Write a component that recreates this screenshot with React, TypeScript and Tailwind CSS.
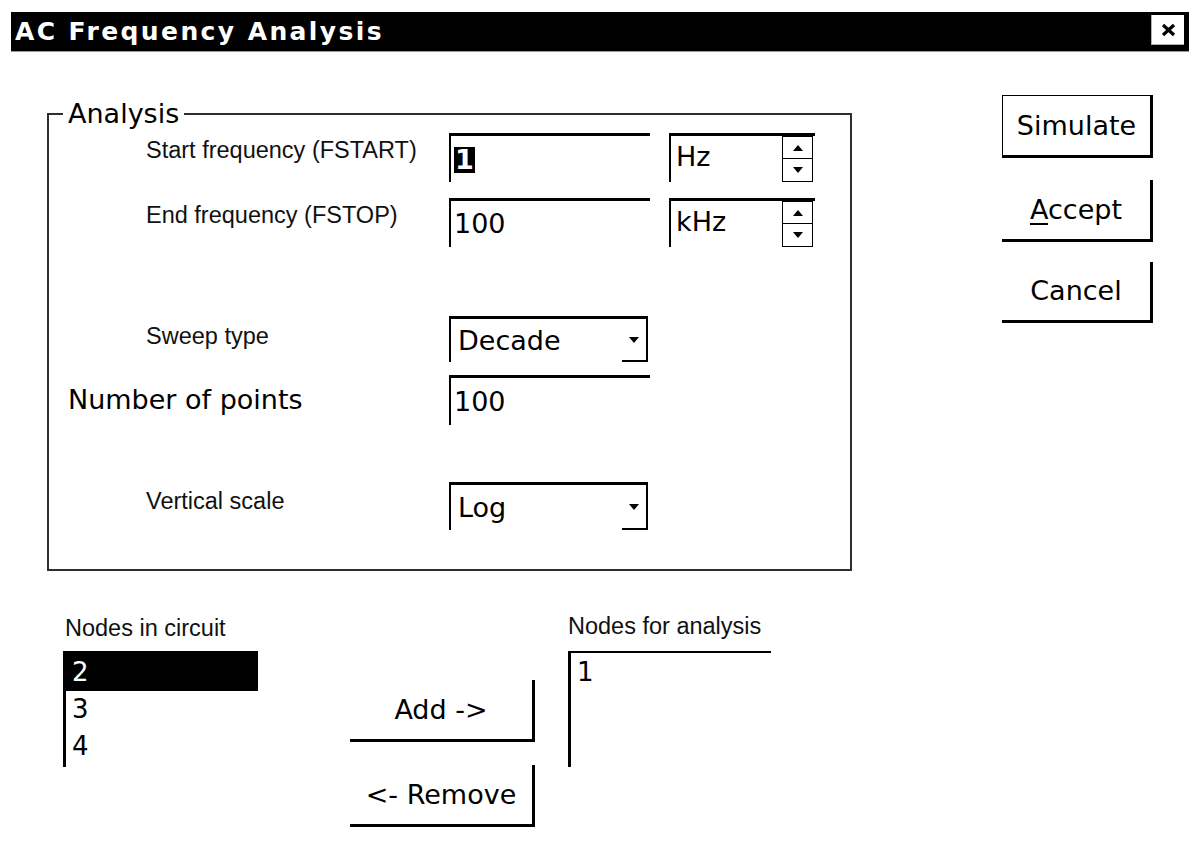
import React from "react";

const big = "font-['DejaVu_Sans',sans-serif] text-[27px] leading-[32px]";
const small = "font-['Liberation_Sans',Arial,sans-serif] text-[23.5px] leading-[27px] text-[#111]";

function Tri({ down }: { down?: boolean }) {
  return (
    <svg width="10" height="6" viewBox="0 0 10 6">
      <polygon points={down ? "0,0 10,0 5,6" : "0,6 10,6 5,0"} fill="black" />
    </svg>
  );
}

function TextField({ children, h = "h-[49px]" }: { children: React.ReactNode; h?: string }) {
  return (
    <div className={`w-[201px] ${h} border-t-[3px] border-l-2 border-black flex items-center pl-[3px] ${big}`}>
      {children}
    </div>
  );
}

function UnitSpinner({ unit }: { unit: string }) {
  return (
    <div className="ml-[19px] w-[146px] h-[49px] border-t-[3px] border-l-2 border-black flex">
      <div className={`flex-1 pl-[5px] pt-[5px] ${big}`}>{unit}</div>
      <div className="w-[31px] mr-[2px] flex flex-col">
        <div className="h-[23px] border border-black flex items-center justify-center">
          <Tri />
        </div>
        <div className="h-[23px] border border-t-0 border-black flex items-center justify-center">
          <Tri down />
        </div>
      </div>
    </div>
  );
}

function Dropdown({ value, h }: { value: string; h: string }) {
  return (
    <div className={`w-[199px] ${h} border-t-[3px] border-l-2 border-black flex`}>
      <div className={`flex-1 pl-[7px] flex items-center ${big}`}>{value}</div>
      <div className="w-[26px] border-r-2 border-b-2 border-black flex items-center justify-center">
        <Tri down />
      </div>
    </div>
  );
}

function ShadowButton({ children, className = "" }: { children: React.ReactNode; className?: string }) {
  return (
    <div className={`border-r-[3px] border-b-[3px] border-black flex items-center justify-center ${big} ${className}`}>
      {children}
    </div>
  );
}

export default function App() {
  return (
    <div className="w-[1189px] h-[863px] bg-white text-black overflow-hidden">
      {/* Title bar */}
      <div className="mt-[12px] ml-[11px] h-[40px] bg-black border-b border-[#9a9a9a] flex items-start justify-between">
        <div className="pl-[4px] font-['DejaVu_Sans',sans-serif] font-bold text-[25px] leading-[40px] tracking-[2.4px] text-white">
          AC Frequency Analysis
        </div>
        <div className="mt-[3px] mr-[5px] w-[33px] h-[30px] bg-white border-l border-b border-[#b0b0b0] flex items-center justify-center">
          <svg width="15" height="14" viewBox="0 0 15 14">
            <path d="M2 2 L13 12 M13 2 L2 12" stroke="black" strokeWidth="3.2" />
          </svg>
        </div>
      </div>

      <div className="flex items-start">
        {/* Left column */}
        <div className="ml-[47px] mt-[61px] w-[805px]">
          <div className="h-[458px] border-2 border-[#2e2e2e]">
            <div className={`-mt-[17px] ml-[14px] w-fit bg-white px-[5px] ${big}`}>Analysis</div>

            <div className="mt-[3px] flex">
              <div className={`w-[400px] pl-[97px] pt-[4px] ${small}`}>Start frequency (FSTART)</div>
              <div className={`w-[201px] h-[49px] border-t-[3px] border-l-2 border-black pl-[3px] pt-[11px] ${big}`}>
                <span className="block w-fit bg-black text-white font-bold px-[1px] leading-[26px]">1</span>
              </div>
              <UnitSpinner unit="Hz" />
            </div>

            <div className="mt-[16px] flex">
              <div className={`w-[400px] pl-[97px] pt-[4px] ${small}`}>End frequency (FSTOP)</div>
              <TextField>100</TextField>
              <UnitSpinner unit="kHz" />
            </div>

            <div className="mt-[69px] flex">
              <div className={`w-[400px] pl-[97px] pt-[7px] ${small}`}>Sweep type</div>
              <Dropdown value="Decade" h="h-[46px]" />
            </div>

            <div className="mt-[13px] flex">
              <div className={`w-[400px] pl-[19px] pt-[9px] ${big}`}>Number of points</div>
              <TextField h="h-[50px]">100</TextField>
            </div>

            <div className="mt-[57px] flex">
              <div className={`w-[400px] pl-[97px] pt-[6px] ${small}`}>Vertical scale</div>
              <Dropdown value="Log" h="h-[48px]" />
            </div>
          </div>

          {/* Node lists */}
          <div className="mt-[42px] flex items-start">
            <div className="ml-[16px] w-[195px]">
              <div className={`pl-[2px] pt-[2px] ${small}`}>Nodes in circuit</div>
              <div className="mt-[9px] h-[116px] border-t-2 border-l-[3px] border-black font-['DejaVu_Sans',sans-serif] text-[26px]">
                <div className="h-[38px] bg-black text-white pl-[6px] flex items-center">2</div>
                <div className="h-[37px] pl-[6px] flex items-center">3</div>
                <div className="h-[37px] pl-[6px] flex items-center">4</div>
              </div>
            </div>

            <div className="ml-[92px] mt-[67px] w-[185px]">
              <ShadowButton className="h-[62px]">Add -&gt;</ShadowButton>
              <ShadowButton className="mt-[23px] h-[62px]">&lt;- Remove</ShadowButton>
            </div>

            <div className="ml-[33px] w-[203px]">
              <div className={small}>Nodes for analysis</div>
              <div className="mt-[11px] h-[116px] border-t-2 border-l-[3px] border-black font-['DejaVu_Sans',sans-serif] text-[26px]">
                <div className="h-[38px] pl-[6px] flex items-center">1</div>
              </div>
            </div>
          </div>
        </div>

        {/* Right column: action buttons */}
        <div className="ml-[150px] mt-[43px] w-[151px] flex flex-col">
          <div className={`h-[63px] border border-black border-r-[3px] border-b-[3px] flex items-center justify-center ${big}`}>
            Simulate
          </div>
          <ShadowButton className="mt-[22px] h-[62px]">
            <span>
              <span className="underline decoration-2 underline-offset-[4px]">A</span>ccept
            </span>
          </ShadowButton>
          <ShadowButton className="mt-[20px] h-[61px]">Cancel</ShadowButton>
        </div>
      </div>
    </div>
  );
}
